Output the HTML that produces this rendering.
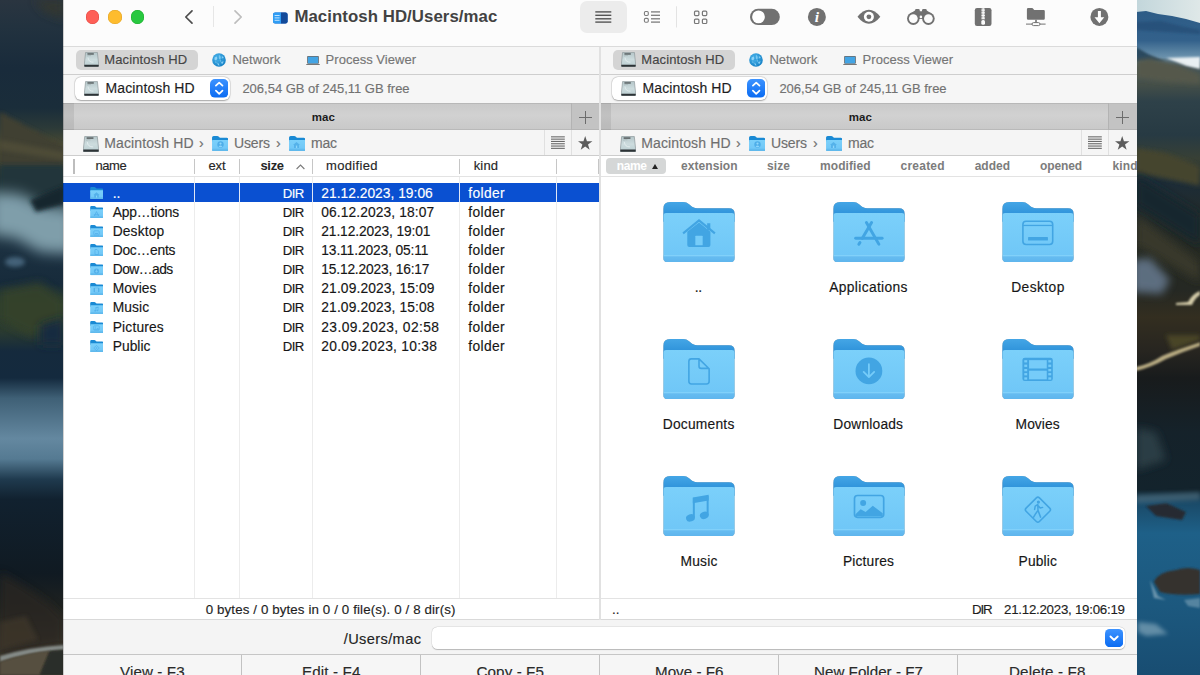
<!DOCTYPE html>
<html lang="en">
<head>
<meta charset="utf-8">
<title>Commander One</title>
<style>
*{box-sizing:border-box;margin:0;padding:0}
html,body{width:1200px;height:675px;overflow:hidden;background:#14222c;font-family:"Liberation Sans",sans-serif;color:#111}
.abs,.t{position:absolute}
.t{white-space:nowrap;line-height:1;-webkit-text-stroke:.15px currentColor}
#win{position:absolute;left:63px;top:0;width:1074px;height:675px;background:#fff;overflow:hidden}
.band{position:absolute;left:0;width:1074px}
</style>
</head>
<body>
<svg width="0" height="0" style="position:absolute">
<defs>
<linearGradient id="gBack" x1="0" y1="0" x2="0" y2="1"><stop offset="0" stop-color="#44a6e6"/><stop offset="1" stop-color="#2287d3"/></linearGradient>
<linearGradient id="gFront" x1="0" y1="0" x2="0" y2="1"><stop offset="0" stop-color="#7bd0fa"/><stop offset=".85" stop-color="#70c7f7"/><stop offset="1" stop-color="#63b9ee"/></linearGradient>
<linearGradient id="gHD" x1="0" y1="0" x2="0" y2="1"><stop offset="0" stop-color="#b4c5c8"/><stop offset=".5" stop-color="#cddcde"/><stop offset="1" stop-color="#b9cdd0"/></linearGradient>
<radialGradient id="gGlobe" cx=".4" cy=".35" r=".7"><stop offset="0" stop-color="#4fb8ee"/><stop offset="1" stop-color="#147fc4"/></radialGradient>
<linearGradient id="gBlueBtn" x1="0" y1="0" x2="0" y2="1"><stop offset="0" stop-color="#3d93ff"/><stop offset="1" stop-color="#0a6bf2"/></linearGradient>
<symbol id="folder" viewBox="0 0 72 61">
<path d="M0 7 Q0 0 7 0 H20 Q23.5 0 26 2.2 L29 4.8 Q31 6.2 34 6.2 H66 Q72 6.2 72 12 V20 H0 Z" fill="url(#gBack)"/>
<path d="M0 14 Q0 11 3 11 H69 Q72 11 72 14 V56 Q72 60.5 67.5 60.5 H4.5 Q0 60.5 0 56 Z" fill="url(#gFront)"/>
<path d="M0 54.6 H72 V56 Q72 60.5 67.5 60.5 H4.5 Q0 60.5 0 56Z" fill="#5ab0ea" opacity=".35"/><rect x="0" y="53.6" width="72" height="1" fill="#8dd8fb" opacity=".8"/>
</symbol>
<symbol id="sfolder" viewBox="0 0 16 15">
<path d="M0 1.6 Q0 0 1.6 0 H5 Q6 0 6.8 .8 L7.4 1.4 Q7.9 1.8 8.8 1.8 H14.6 Q16 1.8 16 3.2 V6 H0 Z" fill="#1a8ad4"/>
<path d="M0 4.6 Q0 4 .6 4 H15.4 Q16 4 16 4.6 V13.6 Q16 15 14.6 15 H1.4 Q0 15 0 13.6 Z" fill="url(#gFront)"/>
<rect x="0" y="12.6" width="16" height="2.4" rx="1.2" fill="#5db6ea" opacity=".7"/>
</symbol>
<symbol id="hd" viewBox="0 0 15 15">
<path d="M1.6 .4 H13.4 L14.7 12.6 V14 Q14.7 14.8 13.9 14.8 H1.1 Q.3 14.8 .3 14 V12.6 Z" fill="url(#gHD)" stroke="#858f92" stroke-width=".6"/>
<path d="M.3 12.7 H14.7 V14 Q14.7 14.8 13.9 14.8 H1.1 Q.3 14.8 .3 14 Z" fill="#2d3336"/>
<rect x="3.4" y="1.2" width="6.4" height="1.5" fill="#5d6466"/>
<path d="M4 5.5 Q4.5 10.5 9.5 10.2" fill="none" stroke="#e9f1f2" stroke-width=".8" opacity=".9"/>
<path d="M3 4 Q5 3.2 7 3.6" fill="none" stroke="#9aa8aa" stroke-width=".5"/>
</symbol>
<symbol id="globe" viewBox="0 0 14 14">
<circle cx="7" cy="7" r="6.8" fill="url(#gGlobe)"/>
<path d="M2.6 4.4 L4.6 3.6 L5.4 5.6 L4 7.4 L2.4 6.6 Z M7.4 1.6 L8.6 4 L8.2 6.4 L7.2 5.6 Z M10 3 L11.8 4.8 L10.8 5.6 L9.8 4.4Z M9.2 9 L11.6 8.2 L10.8 10.8 L9.4 10.6Z M5.2 9.6 L6.6 10.4 L7.6 12.6 L6 12.2 Z M7.8 7.2 L9.2 7.8 L8.2 8.8Z M3 8.6 L4.4 8.8 L4.2 10.4Z" fill="#9fdcfb" opacity=".8"/>
<path d="M5.8 2 L6.6 6.8 L5.6 7.2 Z M9 6 L10.4 6.4 L9.4 7.4Z" fill="#0f74b8" opacity=".6"/>
</symbol>
<symbol id="laptop" viewBox="0 0 15 10">
<rect x="1.2" y="0" width="12.6" height="8.4" rx=".8" fill="#6b6b6b"/>
<rect x="2" y=".8" width="11" height="7" fill="#43a4e4"/>
<path d="M0 8.5 H15 L14.4 9.6 H.6 Z" fill="#777"/>
</symbol>
</defs></svg>
<svg class="abs" style="left:0;top:0" width="64" height="675" viewBox="0 0 64 675">
<defs>
<linearGradient id="lbg" x1="0" y1="0" x2="0" y2="675" gradientUnits="userSpaceOnUse">
<stop offset="0" stop-color="#2a3540"/><stop offset=".04" stop-color="#22323f"/><stop offset=".1" stop-color="#192b3b"/><stop offset=".16" stop-color="#1a2d3a"/>
<stop offset=".19" stop-color="#2c3a38"/><stop offset=".215" stop-color="#4a4a32"/><stop offset=".24" stop-color="#3c4030"/><stop offset=".27" stop-color="#23343a"/>
<stop offset=".3" stop-color="#2a4048"/><stop offset=".37" stop-color="#1b3040"/><stop offset=".42" stop-color="#172b3b"/><stop offset=".45" stop-color="#2c3d2e"/><stop offset=".49" stop-color="#2b3b30"/>
<stop offset=".52" stop-color="#152a3d"/><stop offset=".56" stop-color="#142a3e"/><stop offset=".59" stop-color="#3f6076"/><stop offset=".65" stop-color="#6488a0"/><stop offset=".68" stop-color="#557a92"/><stop offset=".71" stop-color="#1f3a4e"/>
<stop offset=".74" stop-color="#11212f"/><stop offset=".85" stop-color="#101a22"/><stop offset=".9" stop-color="#1f2220"/><stop offset=".95" stop-color="#39342a"/><stop offset="1" stop-color="#3a372c"/>
</linearGradient>
<filter id="b4" x="-50%" y="-50%" width="200%" height="200%"><feGaussianBlur stdDeviation="4"/></filter>
<filter id="b2" x="-50%" y="-50%" width="200%" height="200%"><feGaussianBlur stdDeviation="2"/></filter>
<filter id="b7" x="-50%" y="-50%" width="200%" height="200%"><feGaussianBlur stdDeviation="7"/></filter>
<filter id="b1" x="-50%" y="-50%" width="200%" height="200%"><feGaussianBlur stdDeviation=".8"/></filter>
</defs>
<rect width="64" height="675" fill="url(#lbg)"/>
<path d="M34 0 H64 V20 L44 12Z" fill="#34372f" filter="url(#b4)" opacity=".8"/>
<path d="M0 112 L30 128 L64 146 V166 H0Z" fill="#403f30" filter="url(#b2)"/>
<path d="M0 140 L64 152 V160 L0 150Z" fill="#57533b" filter="url(#b2)" opacity=".6"/>
<path d="M0 165 H64 V200 H0Z" fill="#23343a" filter="url(#b2)"/>
<path d="M-10 192 L20 194 L42 206 L74 210 V254 L40 252 L16 238 L-10 234Z" fill="#7f9eaa" filter="url(#b7)"/>
<path d="M30 200 L64 186 V204 L36 212Z" fill="#16262e" filter="url(#b2)"/>
<ellipse cx="15" cy="262" rx="10" ry="5" fill="#4f7088" filter="url(#b2)" opacity=".8"/>
<path d="M0 290 L40 282 L64 300 V330 L30 336 L0 320Z" fill="#34432c" filter="url(#b4)" opacity=".9"/>
<path d="M40 325 L64 318 V345 H40Z" fill="#152a40" filter="url(#b4)"/>
<path d="M0 572 L30 590 L50 604 L64 618 V645 L0 655Z" fill="#2b2823" filter="url(#b4)" opacity=".75"/>
<path d="M0 622 L26 616 L38 640 L0 650Z" fill="#40392b" filter="url(#b2)" opacity=".7"/>
<path d="M0 656 Q30 647 64 645 V650 Q30 652 0 662Z" fill="#848a87" filter="url(#b1)"/>
<path d="M0 662 Q30 652 50 651 L40 675 H0Z" fill="#565040" filter="url(#b1)"/>
<path d="M50 651 L64 650 V675 H40Z" fill="#2a2d2a" filter="url(#b1)"/>
</svg>
<svg class="abs" style="left:1136px;top:0" width="64" height="675" viewBox="0 0 64 675">
<defs>
<linearGradient id="rbg" x1="0" y1="0" x2="0" y2="675" gradientUnits="userSpaceOnUse">
<stop offset="0" stop-color="#2b5a85"/><stop offset=".06" stop-color="#33618b"/><stop offset=".075" stop-color="#557f9f"/><stop offset=".085" stop-color="#6c93ae"/>
<stop offset=".1" stop-color="#44555a"/><stop offset=".125" stop-color="#454f48"/><stop offset=".15" stop-color="#2e4149"/><stop offset=".2" stop-color="#273a43"/>
<stop offset=".235" stop-color="#384035"/><stop offset=".27" stop-color="#1c2c37"/><stop offset=".32" stop-color="#232b2a"/><stop offset=".38" stop-color="#252922"/>
<stop offset=".43" stop-color="#252823"/><stop offset=".47" stop-color="#332e20"/><stop offset=".52" stop-color="#272520"/><stop offset=".56" stop-color="#181b1c"/>
<stop offset=".64" stop-color="#15222a"/><stop offset=".725" stop-color="#13232c"/><stop offset=".745" stop-color="#1a4a68"/><stop offset=".79" stop-color="#1e6088"/><stop offset=".9" stop-color="#1c587e"/><stop offset="1" stop-color="#184d72"/>
</linearGradient>
<linearGradient id="sky" x1="0" y1="0" x2="1" y2="0"><stop offset="0" stop-color="#c2d6db"/><stop offset="1" stop-color="#dfe8e8"/></linearGradient>
</defs>
<rect width="64" height="675" fill="url(#rbg)"/>
<path d="M0 0 H64 V23 L50 19 L36 16 L22 14 L10 11 L0 12Z" fill="url(#sky)"/>
<path d="M0 22 L25 21 L45 26 L64 30 V34 L0 30Z" fill="#264f78" filter="url(#b1)" opacity=".8"/>
<path d="M30 58 L64 57 V69 L50 66Z" fill="#e9f0f3" filter="url(#b1)"/>
<path d="M0 47 L12 54 L30 62 L0 62Z" fill="#2b485e" filter="url(#b1)"/>
<path d="M0 60 L14 58 L40 64 L64 74 V84 L30 82 L0 78Z" fill="#55594b" filter="url(#b2)"/>
<path d="M0 148 L30 153 L64 166 V186 L0 172Z" fill="#44452f" filter="url(#b2)"/>
<path d="M0 175 L64 215 V245 L0 205Z" fill="#15252f" filter="url(#b4)"/>
<path d="M0 215 L64 262 V282 L0 245Z" fill="#38372a" filter="url(#b4)"/>
<path d="M-4 260 L14 258 L34 280 L26 294 L-4 292Z" fill="#64768a" filter="url(#b4)" opacity=".9"/>
<path d="M40 303 L52 302 Q56 294 64 291 V295 Q59 298 56 305 L40 305Z" fill="#d3cba8" filter="url(#b1)"/>
<path d="M0 367 Q14 364 26 356 Q44 348 64 342 V346 Q46 352 30 359 Q16 367 0 371Z" fill="#b8ab82" filter="url(#b1)"/>
<path d="M30 335 L64 335 V340 L36 350Z" fill="#4a4528" filter="url(#b2)"/>
<path d="M0 428 L20 432 L30 460 L0 470Z" fill="#2b3c45" filter="url(#b4)"/>
<path d="M10 506 L30 503 L50 512 L46 520 L20 516Z" fill="#262c33" filter="url(#b1)"/>
<path d="M18 582 Q22 572 40 570 Q52 566 64 570 V594 Q40 596 24 592Z" fill="#34312d" filter="url(#b1)"/>
<path d="M14 580 L22 596 L30 600 L18 598Z" fill="#a9c3d0" filter="url(#b1)" opacity=".55"/>
<path d="M48 600 L64 598 V608 L52 606Z" fill="#8fb0c2" filter="url(#b1)" opacity=".5"/>
<path d="M2 622 L20 624 L32 634 L10 636 L2 632Z" fill="#9dbccb" filter="url(#b2)" opacity=".55"/>
<path d="M0 495 L64 492 V500 L0 503Z" fill="#5f7f90" filter="url(#b2)" opacity=".5"/>
</svg>

<div id="win">
<div class="band" style="top:0;height:46px;background:#fcfcfc"></div>
<div class="abs" style="left:22.7px;top:10.1px;width:13.6px;height:13.6px;background:#fe5f57;border-radius:50%;box-shadow:inset 0 0 0 .5px #e0443e"></div>
<div class="abs" style="left:45.2px;top:10.1px;width:13.6px;height:13.6px;background:#febc2e;border-radius:50%;box-shadow:inset 0 0 0 .5px #dea123"></div>
<div class="abs" style="left:67.7px;top:10.1px;width:13.6px;height:13.6px;background:#28c840;border-radius:50%;box-shadow:inset 0 0 0 .5px #1aab29"></div>
<svg class="abs" style="left:118px;top:8px" width="16" height="18" viewBox="0 0 16 18"><path d="M11 2.8 L4.8 9 L11 15.2" fill="none" stroke="#4d4d4d" stroke-width="1.7" stroke-linecap="round" stroke-linejoin="round"/></svg>
<div class="abs" style="left:150px;top:6px;width:1px;height:21px;background:#e6e6e6;"></div>
<svg class="abs" style="left:167px;top:8px" width="16" height="18" viewBox="0 0 16 18"><path d="M5 2.8 L11.2 9 L5 15.2" fill="none" stroke="#bdbdbd" stroke-width="1.7" stroke-linecap="round" stroke-linejoin="round"/></svg>
<svg class="abs" style="left:210px;top:12px" width="15" height="12" viewBox="0 0 15 12"><rect x="0" y=".5" width="14.6" height="11" rx="2.2" fill="#1a5fc0"/><path d="M2.2 .5 H8 V11.5 H2.2 Q0 11.5 0 9.3 V2.7 Q0 .5 2.2 .5Z" fill="#2f9df4"/><path d="M8 .5 H12.4 Q14.6 .5 14.6 2.7 V9.3 Q14.6 11.5 12.4 11.5 H8Z" fill="#134a9a"/><rect x="1.6" y="3" width="5" height="1" fill="#bfe3ff"/><rect x="1.6" y="5.4" width="5" height="1" fill="#bfe3ff"/><rect x="1.6" y="7.8" width="5" height="1" fill="#bfe3ff"/></svg>
<div class="t" style="left:231.40px;top:9.00px;font-size:16.8px;letter-spacing:0.068px;color:#424242;font-weight:bold;-webkit-text-stroke:0;">Macintosh HD/Users/mac</div>
<div class="abs" style="left:517px;top:1px;width:47px;height:31.5px;background:#ececec;border-radius:7px"></div>
<svg class="abs" style="left:517px;top:0" width="560" height="40" viewBox="580 0 560 40"><rect x="595.3" y="11.2" width="16" height="1.4" fill="#555"/><rect x="595.3" y="14.6" width="16" height="1.4" fill="#555"/><rect x="595.3" y="18.1" width="16" height="1.4" fill="#555"/><rect x="595.3" y="21.4" width="16" height="1.4" fill="#555"/><rect x="651" y="11.25" width="9" height="1.3" fill="#7c7c7c"/><rect x="651" y="14.65" width="9" height="1.3" fill="#7c7c7c"/><rect x="651" y="18.15" width="9" height="1.3" fill="#7c7c7c"/><rect x="651" y="21.45" width="9" height="1.3" fill="#7c7c7c"/><rect x="644.4" y="11.55" width="3.9" height="3.9" rx="1.2" fill="none" stroke="#7c7c7c" stroke-width="1.1"/><rect x="644.4" y="18.35" width="3.9" height="3.9" rx="1.2" fill="none" stroke="#7c7c7c" stroke-width="1.1"/><rect x="676" y="6.3" width="1" height="21.2" fill="#e3e3e3"/><rect x="694.5" y="11.2" width="4.4" height="4.4" rx="1" fill="none" stroke="#777" stroke-width="1.2"/><rect x="694.5" y="19.1" width="4.4" height="4.4" rx="1" fill="none" stroke="#777" stroke-width="1.2"/><rect x="702.4" y="11.2" width="4.4" height="4.4" rx="1" fill="none" stroke="#777" stroke-width="1.2"/><rect x="702.4" y="19.1" width="4.4" height="4.4" rx="1" fill="none" stroke="#777" stroke-width="1.2"/><rect x="750" y="8.8" width="29.8" height="16.2" rx="8.1" fill="#717171"/><circle cx="758.5" cy="16.9" r="6.4" fill="#fff"/><circle cx="816.9" cy="16.9" r="9" fill="#717171"/><text x="816.9" y="22.2" font-family="Liberation Serif,serif" font-style="italic" font-weight="bold" font-size="15.5" fill="#fff" text-anchor="middle">i</text><path d="M857.5 16.8 Q863 9.8 868.9 9.8 Q874.8 9.8 880.3 16.8 Q874.8 23.8 868.9 23.8 Q863 23.8 857.5 16.8Z" fill="#717171"/><circle cx="868.9" cy="16.8" r="5" fill="#fff"/><circle cx="868.9" cy="16.8" r="2.4" fill="#717171"/><path d="M915 10.4 Q915 9 916.4 9 H918.4 Q919.8 9 919.8 10.4 V11.2 H922 V10.4 Q922 9 923.4 9 H925.4 Q926.8 9 926.8 10.4 L932 14 L928.5 19 H913.1 L909.6 14 Z" fill="#717171"/><circle cx="913.3" cy="18.6" r="6.3" fill="#717171"/><circle cx="928.4" cy="18.6" r="6.3" fill="#717171"/><circle cx="913.3" cy="18.6" r="4.4" fill="#fcfcfc"/><circle cx="928.4" cy="18.6" r="4.4" fill="#fcfcfc"/><circle cx="920.9" cy="16.9" r="1.3" fill="#fcfcfc"/><rect x="974.8" y="8.1" width="16.7" height="17.9" rx="2.2" fill="#717171"/><rect x="981.4" y="8.6" width="3.5" height="1.05" fill="#fcfcfc"/><rect x="981.4" y="10.2" width="3.5" height="1.05" fill="#fcfcfc"/><rect x="981.4" y="11.8" width="3.5" height="1.05" fill="#fcfcfc"/><rect x="981.4" y="13.4" width="3.5" height="1.05" fill="#fcfcfc"/><rect x="981.4" y="15" width="3.5" height="1.05" fill="#fcfcfc"/><rect x="981.4" y="16.6" width="3.5" height="1.05" fill="#fcfcfc"/><rect x="981.4" y="18.2" width="3.5" height="1.05" fill="#fcfcfc"/><rect x="982.6" y="8.1" width="1.1" height="11" fill="#fcfcfc"/><rect x="981.3" y="19.9" width="3.7" height="4.8" rx="1.5" fill="#fcfcfc"/><path d="M1026.9 9.4 Q1026.9 8.1 1028.2 8.1 H1032 Q1032.8 8.1 1033.4 8.9 L1034.2 9.9 H1043.6 Q1044.8 9.9 1044.8 11.1 V18.6 Q1044.8 19.8 1043.6 19.8 H1028.1 Q1026.9 19.8 1026.9 18.6Z" fill="#717171"/><rect x="1035.2" y="19.8" width="1.6" height="3.4" fill="#717171"/><rect x="1026" y="23.6" width="19.6" height="1" fill="#717171"/><rect x="1032" y="22.6" width="8" height="3" rx="1.5" fill="#fcfcfc" stroke="#717171" stroke-width="1"/><circle cx="1099.4" cy="16.9" r="9" fill="#717171"/><path d="M1097.9 11 H1100.9 V17.3 H1104.3 L1099.4 23.2 L1094.5 17.3 H1097.9Z" fill="#fff"/></svg>
<div class="abs" style="left:0px;top:46px;width:1074px;height:1px;background:#dbdbdb;"></div>
<div class="abs" style="left:0px;top:47px;width:1074px;height:56px;background:#f6f6f6;"></div>
<div class="abs" style="left:0px;top:74px;width:1074px;height:1px;background:#cecece;"></div>
<div class="abs" style="left:13px;top:50px;width:121.7px;height:19.8px;background:#d4d4d4;border-radius:5px"></div>
<svg class="abs" style="left:21px;top:52px" width="15" height="15"><use href="#hd"/></svg>
<div class="t" style="left:41.30px;top:53.00px;font-size:13px;letter-spacing:0.115px;color:#454545;">Macintosh HD</div>
<svg class="abs" style="left:149.3px;top:52.8px" width="14" height="14"><use href="#globe"/></svg>
<div class="t" style="left:169.40px;top:53.00px;font-size:13px;letter-spacing:0.054px;color:#757575;">Network</div>
<svg class="abs" style="left:243px;top:55.8px" width="14" height="9.4"><use href="#laptop"/></svg>
<div class="t" style="left:262.60px;top:53.00px;font-size:13px;letter-spacing:0.025px;color:#757575;">Process Viewer</div>
<div class="abs" style="left:11.6px;top:77.2px;width:155.7px;height:23px;background:#fff;border-radius:6px;box-shadow:0 0 0 .5px rgba(0,0,0,.12),0 .5px 1.5px rgba(0,0,0,.28)"></div>
<svg class="abs" style="left:21px;top:80.8px" width="15" height="15"><use href="#hd"/></svg>
<div class="t" style="left:42.50px;top:81.00px;font-size:14px;letter-spacing:0.116px;color:#1e1e1e;">Macintosh HD</div>
<svg class="abs" style="left:147px;top:79.3px" width="18.4" height="18.6" viewBox="0 0 18.4 18.6"><rect width="18.4" height="18.6" rx="5" fill="url(#gBlueBtn)"/><path d="M5.9 6.7 L9.2 3.6 L12.5 6.7 M5.9 11.6 L9.2 14.8 L12.5 11.6" fill="none" stroke="#fff" stroke-width="1.7" stroke-linecap="round" stroke-linejoin="round"/></svg>
<div class="t" style="left:179.40px;top:82.00px;font-size:13px;letter-spacing:-0.009px;color:#727272;">206,54 GB of 245,11 GB free</div>
<div class="abs" style="left:0px;top:103px;width:537px;height:27px;background:linear-gradient(#cacaca,#d1d1d1 45%,#c9c9c9);border-top:1px solid #b8b8b8;border-bottom:1px solid #b9b9b9"></div>
<div class="abs" style="left:0px;top:103px;width:11px;height:27px;background:rgba(0,0,0,.075);"></div>
<div class="abs" style="left:508px;top:103px;width:28.5px;height:27px;background:#c3c3c3;box-shadow:inset 1px 0 0 #b3b3b3,inset 0 -1px 0 #b5b5b5,inset 0 1px 0 #bbb"></div>
<div class="abs" style="left:515.5px;top:116.5px;width:13px;height:1px;background:#6c6c6c;"></div>
<div class="abs" style="left:521.5px;top:110.5px;width:1px;height:13px;background:#6c6c6c;"></div>
<div class="t" style="left:248.70px;top:112.00px;font-size:11.5px;letter-spacing:0.141px;color:#1c1c1c;font-weight:bold;-webkit-text-stroke:0;">mac</div>
<div class="abs" style="left:0px;top:130px;width:537px;height:25px;background:#f5f5f5;"></div>
<svg class="abs" style="left:19.5px;top:135.5px" width="16" height="16"><use href="#hd"/></svg>
<div class="t" style="left:41.20px;top:136.00px;font-size:14px;letter-spacing:0.126px;color:#6f6f6f;">Macintosh HD</div>
<div class="t" style="left:136.00px;top:136.00px;font-size:14px;color:#6f6f6f;">›</div>
<svg class="abs" style="left:149.1px;top:136.1px" width="16.3" height="15.2"><use href="#sfolder"/></svg>
<div class="t" style="left:171.00px;top:136.00px;font-size:14px;letter-spacing:-0.140px;color:#6f6f6f;">Users</div>
<div class="t" style="left:213.00px;top:136.00px;font-size:14px;color:#6f6f6f;">›</div>
<svg class="abs" style="left:225.7px;top:136.1px" width="16.3" height="15.2"><use href="#sfolder"/></svg>
<div class="t" style="left:248.00px;top:136.00px;font-size:14px;letter-spacing:-0.225px;color:#6f6f6f;">mac</div>
<svg class="abs" style="left:153.8px;top:141.3px" width="7" height="7" viewBox="0 0 7 7"><circle cx="3.5" cy="3.5" r="3.2" fill="#4eaee9"/><circle cx="3.5" cy="2.6" r="1.1" fill="#8ed6fb"/><path d="M1.5 5.6 Q3.5 3.2 5.5 5.6 Q3.5 7 1.5 5.6Z" fill="#8ed6fb"/></svg>
<svg class="abs" style="left:230.4px;top:141.8px" width="7" height="6" viewBox="0 0 7 6"><path d="M3.5 0 L7 3 H6 V6 H1 V3 H0Z" fill="#55b2ea"/><rect x="2.9" y="3.6" width="1.3" height="2.4" fill="#8ed6fb"/></svg>
<div class="abs" style="left:480.5px;top:130px;width:1px;height:25px;background:#e0e0e0;"></div>
<div class="abs" style="left:508px;top:130px;width:1px;height:25px;background:#e0e0e0;"></div>
<svg class="abs" style="left:487.7px;top:136px" width="14" height="13" viewBox="0 0 14 13"><rect x="0" y="0.3" width="13.8" height="1.1" fill="#6a6a6a"/><rect x="0" y="2.6" width="13.8" height="1.1" fill="#6a6a6a"/><rect x="0" y="4.9" width="13.8" height="1.1" fill="#6a6a6a"/><rect x="0" y="7.2" width="13.8" height="1.1" fill="#6a6a6a"/><rect x="0" y="9.5" width="13.8" height="1.1" fill="#6a6a6a"/><rect x="0" y="11.8" width="13.8" height="1.1" fill="#6a6a6a"/></svg>
<svg class="abs" style="left:515.4px;top:136.4px" width="14.4" height="13.8" viewBox="0 0 24 23"><path d="M12 0 L14.9 8.6 L24 8.7 L16.7 14.1 L19.4 22.8 L12 17.6 L4.6 22.8 L7.3 14.1 L0 8.7 L9.1 8.6Z" fill="#5c5c5c"/></svg>
<div class="abs" style="left:0px;top:155px;width:537px;height:1px;background:#cdcdcd;"></div>
<div class="abs" style="left:550px;top:50px;width:121.7px;height:19.8px;background:#d4d4d4;border-radius:5px"></div>
<svg class="abs" style="left:558px;top:52px" width="15" height="15"><use href="#hd"/></svg>
<div class="t" style="left:578.30px;top:53.00px;font-size:13px;letter-spacing:0.115px;color:#454545;">Macintosh HD</div>
<svg class="abs" style="left:686.3px;top:52.8px" width="14" height="14"><use href="#globe"/></svg>
<div class="t" style="left:706.40px;top:53.00px;font-size:13px;letter-spacing:0.054px;color:#757575;">Network</div>
<svg class="abs" style="left:780px;top:55.8px" width="14" height="9.4"><use href="#laptop"/></svg>
<div class="t" style="left:799.60px;top:53.00px;font-size:13px;letter-spacing:0.025px;color:#757575;">Process Viewer</div>
<div class="abs" style="left:548.6px;top:77.2px;width:155.7px;height:23px;background:#fff;border-radius:6px;box-shadow:0 0 0 .5px rgba(0,0,0,.12),0 .5px 1.5px rgba(0,0,0,.28)"></div>
<svg class="abs" style="left:558px;top:80.8px" width="15" height="15"><use href="#hd"/></svg>
<div class="t" style="left:579.50px;top:81.00px;font-size:14px;letter-spacing:0.116px;color:#1e1e1e;">Macintosh HD</div>
<svg class="abs" style="left:684px;top:79.3px" width="18.4" height="18.6" viewBox="0 0 18.4 18.6"><rect width="18.4" height="18.6" rx="5" fill="url(#gBlueBtn)"/><path d="M5.9 6.7 L9.2 3.6 L12.5 6.7 M5.9 11.6 L9.2 14.8 L12.5 11.6" fill="none" stroke="#fff" stroke-width="1.7" stroke-linecap="round" stroke-linejoin="round"/></svg>
<div class="t" style="left:716.40px;top:82.00px;font-size:13px;letter-spacing:-0.009px;color:#727272;">206,54 GB of 245,11 GB free</div>
<div class="abs" style="left:537px;top:103px;width:537px;height:27px;background:linear-gradient(#cacaca,#d1d1d1 45%,#c9c9c9);border-top:1px solid #b8b8b8;border-bottom:1px solid #b9b9b9"></div>
<div class="abs" style="left:538px;top:103px;width:10px;height:27px;background:rgba(0,0,0,.075);"></div>
<div class="abs" style="left:1045px;top:103px;width:28.5px;height:27px;background:#c3c3c3;box-shadow:inset 1px 0 0 #b3b3b3,inset 0 -1px 0 #b5b5b5,inset 0 1px 0 #bbb"></div>
<div class="abs" style="left:1052.5px;top:116.5px;width:13px;height:1px;background:#6c6c6c;"></div>
<div class="abs" style="left:1058.5px;top:110.5px;width:1px;height:13px;background:#6c6c6c;"></div>
<div class="t" style="left:785.70px;top:112.00px;font-size:11.5px;letter-spacing:0.141px;color:#1c1c1c;font-weight:bold;-webkit-text-stroke:0;">mac</div>
<div class="abs" style="left:537px;top:130px;width:537px;height:25px;background:#f5f5f5;"></div>
<svg class="abs" style="left:556.5px;top:135.5px" width="16" height="16"><use href="#hd"/></svg>
<div class="t" style="left:578.20px;top:136.00px;font-size:14px;letter-spacing:0.126px;color:#6f6f6f;">Macintosh HD</div>
<div class="t" style="left:673.00px;top:136.00px;font-size:14px;color:#6f6f6f;">›</div>
<svg class="abs" style="left:686.1px;top:136.1px" width="16.3" height="15.2"><use href="#sfolder"/></svg>
<div class="t" style="left:708.00px;top:136.00px;font-size:14px;letter-spacing:-0.140px;color:#6f6f6f;">Users</div>
<div class="t" style="left:750.00px;top:136.00px;font-size:14px;color:#6f6f6f;">›</div>
<svg class="abs" style="left:762.7px;top:136.1px" width="16.3" height="15.2"><use href="#sfolder"/></svg>
<div class="t" style="left:785.00px;top:136.00px;font-size:14px;letter-spacing:-0.225px;color:#6f6f6f;">mac</div>
<svg class="abs" style="left:690.8px;top:141.3px" width="7" height="7" viewBox="0 0 7 7"><circle cx="3.5" cy="3.5" r="3.2" fill="#4eaee9"/><circle cx="3.5" cy="2.6" r="1.1" fill="#8ed6fb"/><path d="M1.5 5.6 Q3.5 3.2 5.5 5.6 Q3.5 7 1.5 5.6Z" fill="#8ed6fb"/></svg>
<svg class="abs" style="left:767.4px;top:141.8px" width="7" height="6" viewBox="0 0 7 6"><path d="M3.5 0 L7 3 H6 V6 H1 V3 H0Z" fill="#55b2ea"/><rect x="2.9" y="3.6" width="1.3" height="2.4" fill="#8ed6fb"/></svg>
<div class="abs" style="left:1017.5px;top:130px;width:1px;height:25px;background:#e0e0e0;"></div>
<div class="abs" style="left:1045px;top:130px;width:1px;height:25px;background:#e0e0e0;"></div>
<svg class="abs" style="left:1024.7px;top:136px" width="14" height="13" viewBox="0 0 14 13"><rect x="0" y="0.3" width="13.8" height="1.1" fill="#6a6a6a"/><rect x="0" y="2.6" width="13.8" height="1.1" fill="#6a6a6a"/><rect x="0" y="4.9" width="13.8" height="1.1" fill="#6a6a6a"/><rect x="0" y="7.2" width="13.8" height="1.1" fill="#6a6a6a"/><rect x="0" y="9.5" width="13.8" height="1.1" fill="#6a6a6a"/><rect x="0" y="11.8" width="13.8" height="1.1" fill="#6a6a6a"/></svg>
<svg class="abs" style="left:1052.4px;top:136.4px" width="14.4" height="13.8" viewBox="0 0 24 23"><path d="M12 0 L14.9 8.6 L24 8.7 L16.7 14.1 L19.4 22.8 L12 17.6 L4.6 22.8 L7.3 14.1 L0 8.7 L9.1 8.6Z" fill="#5c5c5c"/></svg>
<div class="abs" style="left:537px;top:155px;width:537px;height:1px;background:#cdcdcd;"></div>
<div class="t" style="left:32.50px;top:159.00px;font-size:13px;letter-spacing:-0.440px;color:#262626;">name</div>
<div class="t" style="left:145.50px;top:159.00px;font-size:13px;letter-spacing:-0.171px;color:#262626;">ext</div>
<div class="t" style="left:197.50px;top:159.00px;font-size:13px;letter-spacing:-0.357px;color:#262626;font-weight:bold;-webkit-text-stroke:0;">size</div>
<svg class="abs" style="left:232.7px;top:164px" width="9" height="6" viewBox="0 0 9 6"><path d="M.6 5 L4.5 1 L8.4 5" fill="none" stroke="#7a7a7a" stroke-width="1.1"/></svg>
<div class="t" style="left:263.00px;top:159.00px;font-size:13px;letter-spacing:0.337px;color:#262626;">modified</div>
<div class="t" style="left:410.70px;top:159.00px;font-size:13px;letter-spacing:0.150px;color:#262626;">kind</div>
<div class="abs" style="left:10.4px;top:158.8px;width:1.2px;height:15px;background:#bdbdbd;"></div>
<div class="abs" style="left:130.5px;top:158.8px;width:1.2px;height:15px;background:#c6c6c6;"></div>
<div class="abs" style="left:175.6px;top:158.8px;width:1.2px;height:15px;background:#c6c6c6;"></div>
<div class="abs" style="left:249.2px;top:158.8px;width:1.2px;height:15px;background:#c6c6c6;"></div>
<div class="abs" style="left:396.2px;top:158.8px;width:1.2px;height:15px;background:#c6c6c6;"></div>
<div class="abs" style="left:493px;top:158.8px;width:1.2px;height:15px;background:#c6c6c6;"></div>
<div class="abs" style="left:535.3px;top:158.8px;width:1.2px;height:15px;background:#c6c6c6;"></div>
<div class="abs" style="left:0px;top:176px;width:537px;height:1px;background:#e3e3e3;"></div>
<div class="abs" style="left:130.6px;top:177px;width:1.2px;height:421px;background:#ececec;"></div>
<div class="abs" style="left:175.7px;top:177px;width:1.2px;height:421px;background:#ececec;"></div>
<div class="abs" style="left:249.3px;top:177px;width:1.2px;height:421px;background:#ececec;"></div>
<div class="abs" style="left:396.3px;top:177px;width:1.2px;height:421px;background:#ececec;"></div>
<div class="abs" style="left:493px;top:177px;width:1.2px;height:421px;background:#ececec;"></div>
<div class="abs" style="left:0px;top:183px;width:536.5px;height:18.9px;background:#0a50d1;"></div>
<div class="abs" style="left:130.6px;top:183px;width:1.2px;height:18.9px;background:#dfe6f5;"></div>
<div class="abs" style="left:175.7px;top:183px;width:1.2px;height:18.9px;background:#dfe6f5;"></div>
<div class="abs" style="left:249.3px;top:183px;width:1.2px;height:18.9px;background:#dfe6f5;"></div>
<div class="abs" style="left:396.3px;top:183px;width:1.2px;height:18.9px;background:#dfe6f5;"></div>
<div class="abs" style="left:493px;top:183px;width:1.2px;height:18.9px;background:#dfe6f5;"></div>
<svg class="abs" style="left:26.7px;top:186.9px" width="13.4" height="12.2"><use href="#sfolder"/></svg>
<svg class="abs" style="left:30px;top:191.6px;opacity:.75" width="7" height="6" viewBox="0 0 7 6"><path d="M3.5 .3 L6.6 3 H5.8 V5.6 H1.2 V3 H.4Z" fill="#4aa9e6"/><rect x="3" y="3.6" width="1.1" height="2" fill="#8ed6fb"/></svg>
<div class="t" style="left:49.70px;top:187.00px;font-size:13.8px;color:#fff;">..</div>
<div class="t" style="left:219.80px;top:187.00px;font-size:13.2px;letter-spacing:-0.666px;color:#fff;">DIR</div>
<div class="t" style="left:258.30px;top:187.00px;font-size:13.8px;letter-spacing:0.014px;color:#fff;">21.12.2023, 19:06</div>
<div class="t" style="left:405.20px;top:187.00px;font-size:13.8px;letter-spacing:0.396px;color:#fff;">folder</div>
<svg class="abs" style="left:26.7px;top:206.025px" width="13.4" height="12.2"><use href="#sfolder"/></svg>
<svg class="abs" style="left:30px;top:210.725px;opacity:.75" width="7" height="6" viewBox="0 0 7 6"><path d="M3.5 .6 L1.4 5 M3.5 .6 L5.6 5 M.8 3.8 H6.2" fill="none" stroke="#4aa9e6" stroke-width=".9"/></svg>
<div class="t" style="left:49.70px;top:206.00px;font-size:13.8px;letter-spacing:-0.126px;color:#161616;">App…tions</div>
<div class="t" style="left:219.80px;top:206.00px;font-size:13.2px;letter-spacing:-0.666px;color:#161616;">DIR</div>
<div class="t" style="left:258.30px;top:206.00px;font-size:13.8px;letter-spacing:0.102px;color:#161616;">06.12.2023, 18:07</div>
<div class="t" style="left:405.20px;top:206.00px;font-size:13.8px;letter-spacing:0.396px;color:#161616;">folder</div>
<svg class="abs" style="left:26.7px;top:225.15px" width="13.4" height="12.2"><use href="#sfolder"/></svg>
<svg class="abs" style="left:30px;top:229.85px;opacity:.75" width="7" height="6" viewBox="0 0 7 6"><rect x=".8" y=".8" width="5.4" height="4.2" rx=".8" fill="none" stroke="#4aa9e6" stroke-width=".8"/><rect x="2" y="3.2" width="3" height=".9" fill="#4aa9e6"/></svg>
<div class="t" style="left:49.70px;top:225.00px;font-size:13.8px;letter-spacing:0.146px;color:#161616;">Desktop</div>
<div class="t" style="left:219.80px;top:225.00px;font-size:13.2px;letter-spacing:-0.666px;color:#161616;">DIR</div>
<div class="t" style="left:258.30px;top:225.00px;font-size:13.8px;letter-spacing:-0.129px;color:#161616;">21.12.2023, 19:01</div>
<div class="t" style="left:405.20px;top:225.00px;font-size:13.8px;letter-spacing:0.396px;color:#161616;">folder</div>
<svg class="abs" style="left:26.7px;top:244.275px" width="13.4" height="12.2"><use href="#sfolder"/></svg>
<svg class="abs" style="left:30px;top:248.975px;opacity:.75" width="7" height="6" viewBox="0 0 7 6"><path d="M2 .5 H4 L5.4 2 V5.5 H2Z" fill="none" stroke="#4aa9e6" stroke-width=".8"/></svg>
<div class="t" style="left:49.70px;top:244.00px;font-size:13.8px;letter-spacing:-0.232px;color:#161616;">Doc…ents</div>
<div class="t" style="left:219.80px;top:244.00px;font-size:13.2px;letter-spacing:-0.666px;color:#161616;">DIR</div>
<div class="t" style="left:258.30px;top:244.00px;font-size:13.8px;letter-spacing:-0.126px;color:#161616;">13.11.2023, 05:11</div>
<div class="t" style="left:405.20px;top:244.00px;font-size:13.8px;letter-spacing:0.396px;color:#161616;">folder</div>
<svg class="abs" style="left:26.7px;top:263.4px" width="13.4" height="12.2"><use href="#sfolder"/></svg>
<svg class="abs" style="left:30px;top:268.1px;opacity:.75" width="7" height="6" viewBox="0 0 7 6"><circle cx="3.5" cy="3" r="2.6" fill="#4aa9e6"/><path d="M3.5 1.6 V4.2 M2.4 3.2 L3.5 4.3 L4.6 3.2" fill="none" stroke="#8ed6fb" stroke-width=".7"/></svg>
<div class="t" style="left:49.70px;top:263.00px;font-size:13.8px;letter-spacing:-0.510px;color:#161616;">Dow…ads</div>
<div class="t" style="left:219.80px;top:263.00px;font-size:13.2px;letter-spacing:-0.666px;color:#161616;">DIR</div>
<div class="t" style="left:258.30px;top:263.00px;font-size:13.8px;letter-spacing:-0.192px;color:#161616;">15.12.2023, 16:17</div>
<div class="t" style="left:405.20px;top:263.00px;font-size:13.8px;letter-spacing:0.396px;color:#161616;">folder</div>
<svg class="abs" style="left:26.7px;top:282.525px" width="13.4" height="12.2"><use href="#sfolder"/></svg>
<svg class="abs" style="left:30px;top:287.225px;opacity:.75" width="7" height="6" viewBox="0 0 7 6"><rect x=".6" y=".8" width="5.8" height="4.4" rx=".6" fill="#4aa9e6"/><rect x="2" y="1.4" width="3" height="1.4" fill="#8ed6fb"/><rect x="2" y="3.3" width="3" height="1.4" fill="#8ed6fb"/></svg>
<div class="t" style="left:49.70px;top:282.00px;font-size:13.8px;letter-spacing:-0.023px;color:#161616;">Movies</div>
<div class="t" style="left:219.80px;top:282.00px;font-size:13.2px;letter-spacing:-0.666px;color:#161616;">DIR</div>
<div class="t" style="left:258.30px;top:282.00px;font-size:13.8px;letter-spacing:0.121px;color:#161616;">21.09.2023, 15:09</div>
<div class="t" style="left:405.20px;top:282.00px;font-size:13.8px;letter-spacing:0.396px;color:#161616;">folder</div>
<svg class="abs" style="left:26.7px;top:301.65px" width="13.4" height="12.2"><use href="#sfolder"/></svg>
<svg class="abs" style="left:30px;top:306.35px;opacity:.75" width="7" height="6" viewBox="0 0 7 6"><path d="M2.6 1.2 L5.4 .6 V1.8 L2.6 2.4Z" fill="#4aa9e6"/><rect x="2.6" y="1.4" width=".6" height="3.2" fill="#4aa9e6"/><rect x="4.8" y="1" width=".6" height="3.2" fill="#4aa9e6"/><circle cx="2.2" cy="4.7" r=".9" fill="#4aa9e6"/><circle cx="4.4" cy="4.3" r=".9" fill="#4aa9e6"/></svg>
<div class="t" style="left:49.70px;top:301.00px;font-size:13.8px;letter-spacing:0.116px;color:#161616;">Music</div>
<div class="t" style="left:219.80px;top:301.00px;font-size:13.2px;letter-spacing:-0.666px;color:#161616;">DIR</div>
<div class="t" style="left:258.30px;top:301.00px;font-size:13.8px;letter-spacing:0.121px;color:#161616;">21.09.2023, 15:08</div>
<div class="t" style="left:405.20px;top:301.00px;font-size:13.8px;letter-spacing:0.396px;color:#161616;">folder</div>
<svg class="abs" style="left:26.7px;top:320.775px" width="13.4" height="12.2"><use href="#sfolder"/></svg>
<svg class="abs" style="left:30px;top:325.475px;opacity:.75" width="7" height="6" viewBox="0 0 7 6"><rect x=".7" y=".8" width="5.6" height="4.4" rx=".8" fill="none" stroke="#4aa9e6" stroke-width=".8"/><path d="M1 4.6 L2.6 3.2 L3.6 3.9 L4.8 2.8 L6 4 V4.8 H1Z" fill="#4aa9e6"/><circle cx="2.4" cy="2.1" r=".6" fill="#4aa9e6"/></svg>
<div class="t" style="left:49.70px;top:321.00px;font-size:13.8px;letter-spacing:0.178px;color:#161616;">Pictures</div>
<div class="t" style="left:219.80px;top:321.00px;font-size:13.2px;letter-spacing:-0.666px;color:#161616;">DIR</div>
<div class="t" style="left:258.30px;top:321.00px;font-size:13.8px;letter-spacing:0.402px;color:#161616;">23.09.2023, 02:58</div>
<div class="t" style="left:405.20px;top:321.00px;font-size:13.8px;letter-spacing:0.396px;color:#161616;">folder</div>
<svg class="abs" style="left:26.7px;top:339.9px" width="13.4" height="12.2"><use href="#sfolder"/></svg>
<svg class="abs" style="left:30px;top:344.6px;opacity:.75" width="7" height="6" viewBox="0 0 7 6"><rect x="1.6" y="1.1" width="3.8" height="3.8" rx=".5" transform="rotate(45 3.5 3)" fill="none" stroke="#4aa9e6" stroke-width=".8"/><circle cx="3.5" cy="3" r=".8" fill="#4aa9e6"/></svg>
<div class="t" style="left:49.70px;top:340.00px;font-size:13.8px;letter-spacing:0.042px;color:#161616;">Public</div>
<div class="t" style="left:219.80px;top:340.00px;font-size:13.2px;letter-spacing:-0.666px;color:#161616;">DIR</div>
<div class="t" style="left:258.30px;top:340.00px;font-size:13.8px;letter-spacing:0.277px;color:#161616;">20.09.2023, 10:38</div>
<div class="t" style="left:405.20px;top:340.00px;font-size:13.8px;letter-spacing:0.396px;color:#161616;">folder</div>
<div class="abs" style="left:543px;top:158px;width:59.7px;height:15.7px;background:#d5d7d7;border-radius:4px"></div>
<div class="t" style="left:553.70px;top:160.00px;font-size:12px;letter-spacing:-0.349px;color:#fff;font-weight:bold;-webkit-text-stroke:0;">name</div>
<svg class="abs" style="left:589.3px;top:163.6px" width="6" height="5" viewBox="0 0 6 5"><path d="M3 0 L6 5 H0Z" fill="#222"/></svg>
<div class="t" style="left:618.00px;top:160.00px;font-size:12px;letter-spacing:0.060px;color:#7c7c7c;font-weight:bold;-webkit-text-stroke:0;">extension</div>
<div class="t" style="left:704.00px;top:160.00px;font-size:12px;letter-spacing:0.106px;color:#7c7c7c;font-weight:bold;-webkit-text-stroke:0;">size</div>
<div class="t" style="left:757.00px;top:160.00px;font-size:12px;letter-spacing:0.072px;color:#7c7c7c;font-weight:bold;-webkit-text-stroke:0;">modified</div>
<div class="t" style="left:837.60px;top:160.00px;font-size:12px;letter-spacing:0.218px;color:#7c7c7c;font-weight:bold;-webkit-text-stroke:0;">created</div>
<div class="t" style="left:911.70px;top:160.00px;font-size:12px;letter-spacing:-0.010px;color:#7c7c7c;font-weight:bold;-webkit-text-stroke:0;">added</div>
<div class="t" style="left:977.00px;top:160.00px;font-size:12px;letter-spacing:-0.094px;color:#7c7c7c;font-weight:bold;-webkit-text-stroke:0;">opened</div>
<div class="t" style="left:1049.50px;top:160.00px;font-size:12px;letter-spacing:0.111px;color:#7c7c7c;font-weight:bold;-webkit-text-stroke:0;">kind</div>
<div class="abs" style="left:537px;top:176px;width:537px;height:1px;background:#e3e3e3;"></div>
<svg class="abs" style="left:600px;top:202px;filter:drop-shadow(0 .6px .7px rgba(0,0,0,.35))" width="72" height="60.6" viewBox="0 0 72 61"><use href="#folder"/><path d="M20 31.6 L36 18.6 L52 31.6" fill="none" stroke="#42a5e3" stroke-width="2.2" stroke-linejoin="miter"/><path d="M24.2 30 L36 20.6 L47.5 30 V43.4 Q47.5 45.4 45.5 45.4 H26.2 Q24.2 45.4 24.2 43.4Z" fill="#42a5e3"/><rect x="44.2" y="21.4" width="3.2" height="7" fill="#42a5e3"/><rect x="32.3" y="34" width="7.4" height="9.6" rx=".6" fill="#76ccf9"/></svg>
<div class="t" style="left:631.70px;top:281.00px;font-size:13.8px;letter-spacing:-0.368px;color:#161616;">..</div>
<svg class="abs" style="left:769.5px;top:202px;filter:drop-shadow(0 .6px .7px rgba(0,0,0,.35))" width="72" height="60.6" viewBox="0 0 72 61"><use href="#folder"/><g fill="none" stroke="#42a5e3" stroke-width="3" stroke-linecap="round"><path d="M22.6 36.6 H49.2"/><path d="M38.6 20.6 L29.3 36.6"/><path d="M26.9 40.8 L25.8 42.6"/><path d="M33.4 20.6 L45.9 42.4"/></g></svg>
<div class="t" style="left:766.30px;top:281.00px;font-size:13.8px;letter-spacing:0.335px;color:#161616;">Applications</div>
<svg class="abs" style="left:939px;top:202px;filter:drop-shadow(0 .6px .7px rgba(0,0,0,.35))" width="72" height="60.6" viewBox="0 0 72 61"><use href="#folder"/><rect x="20.8" y="19.4" width="30" height="23.4" rx="3.2" fill="none" stroke="#42a5e3" stroke-width="1.6"/><path d="M21 23.6 H50.6" stroke="#42a5e3" stroke-width="1.3"/><rect x="26" y="35.2" width="20" height="3.6" rx=".6" fill="#42a5e3"/></svg>
<div class="t" style="left:948.20px;top:281.00px;font-size:13.8px;letter-spacing:0.429px;color:#161616;">Desktop</div>
<svg class="abs" style="left:600px;top:339px;filter:drop-shadow(0 .6px .7px rgba(0,0,0,.35))" width="72" height="60.6" viewBox="0 0 72 61"><use href="#folder"/><path d="M28.2 20 H36 L46.2 30 V42.6 Q46.2 45.3 43.5 45.3 H28.4 Q25.8 45.3 25.8 42.6 V22.6 Q25.8 20 28.2 20Z M36 20 V27.4 Q36 29.6 38.2 29.6 H46" fill="none" stroke="#42a5e3" stroke-width="1.6" stroke-linejoin="round"/></svg>
<div class="t" style="left:599.80px;top:418.00px;font-size:13.8px;letter-spacing:0.213px;color:#161616;">Documents</div>
<svg class="abs" style="left:769.5px;top:339px;filter:drop-shadow(0 .6px .7px rgba(0,0,0,.35))" width="72" height="60.6" viewBox="0 0 72 61"><use href="#folder"/><circle cx="35.9" cy="32.1" r="13.5" fill="#42a5e3"/><path d="M35.9 25.4 V38.2 M30.6 33.2 L35.9 38.4 L41.2 33.2" fill="none" stroke="#76ccf9" stroke-width="1.8" stroke-linecap="round" stroke-linejoin="round"/></svg>
<div class="t" style="left:770.30px;top:418.00px;font-size:13.8px;letter-spacing:0.178px;color:#161616;">Downloads</div>
<svg class="abs" style="left:939px;top:339px;filter:drop-shadow(0 .6px .7px rgba(0,0,0,.35))" width="72" height="60.6" viewBox="0 0 72 61"><use href="#folder"/><rect x="20.3" y="18.8" width="30.6" height="23.6" rx="2.4" fill="#42a5e3"/><rect x="27" y="21.3" width="17.8" height="8.4" fill="#76ccf9"/><rect x="27" y="31.9" width="17.8" height="8.7" fill="#76ccf9"/><rect x="22.2" y="21.3" width="2.9" height="2.3" fill="#76ccf9"/><rect x="22.2" y="25.8" width="2.9" height="2.3" fill="#76ccf9"/><rect x="22.2" y="30.2" width="2.9" height="2.3" fill="#76ccf9"/><rect x="22.2" y="34.3" width="2.9" height="2.3" fill="#76ccf9"/><rect x="22.2" y="38.6" width="2.9" height="2.3" fill="#76ccf9"/><rect x="46.4" y="21.3" width="2.9" height="2.3" fill="#76ccf9"/><rect x="46.4" y="25.8" width="2.9" height="2.3" fill="#76ccf9"/><rect x="46.4" y="30.2" width="2.9" height="2.3" fill="#76ccf9"/><rect x="46.4" y="34.3" width="2.9" height="2.3" fill="#76ccf9"/><rect x="46.4" y="38.6" width="2.9" height="2.3" fill="#76ccf9"/></svg>
<div class="t" style="left:952.60px;top:418.00px;font-size:13.8px;letter-spacing:0.057px;color:#161616;">Movies</div>
<svg class="abs" style="left:600px;top:476px;filter:drop-shadow(0 .6px .7px rgba(0,0,0,.35))" width="72" height="60.6" viewBox="0 0 72 61"><use href="#folder"/><path d="M29.8 21.7 L45.7 18.8 V24.6 L29.8 27.5Z" fill="#42a5e3"/><rect x="29.8" y="22" width="2" height="20" fill="#42a5e3"/><rect x="43.7" y="20" width="2" height="19.6" fill="#42a5e3"/><ellipse cx="27.4" cy="42.2" rx="4.5" ry="3.7" transform="rotate(-20 27.4 42.2)" fill="#42a5e3"/><ellipse cx="41.3" cy="39.6" rx="4.5" ry="3.7" transform="rotate(-20 41.3 39.6)" fill="#42a5e3"/></svg>
<div class="t" style="left:617.40px;top:555.00px;font-size:13.8px;letter-spacing:0.266px;color:#161616;">Music</div>
<svg class="abs" style="left:769.5px;top:476px;filter:drop-shadow(0 .6px .7px rgba(0,0,0,.35))" width="72" height="60.6" viewBox="0 0 72 61"><use href="#folder"/><rect x="21.4" y="19.6" width="29.4" height="22" rx="3" fill="none" stroke="#42a5e3" stroke-width="1.7"/><circle cx="30.1" cy="27.2" r="3" fill="#42a5e3"/><path d="M22.4 38.6 L27.6 33.4 L32.6 36.3 L39.8 30 L49.8 37.6 V40.6 H22.4Z" fill="#42a5e3"/></svg>
<div class="t" style="left:779.90px;top:555.00px;font-size:13.8px;letter-spacing:0.164px;color:#161616;">Pictures</div>
<svg class="abs" style="left:939px;top:476px;filter:drop-shadow(0 .6px .7px rgba(0,0,0,.35))" width="72" height="60.6" viewBox="0 0 72 61"><use href="#folder"/><rect x="26.4" y="24.4" width="19" height="19" rx="2.2" transform="rotate(45 35.9 33.9)" fill="none" stroke="#42a5e3" stroke-width="1.6"/><circle cx="36.4" cy="26.3" r="1.6" fill="#42a5e3"/><path d="M35.6 28.8 L33.2 30.4 L32.6 33.6 M35.8 28.8 L36 34.6 L38.6 41.4 M36 34.6 L33.6 38 L31.6 41.4 M36.2 30 L38.2 32.2 L40.6 31.6" fill="none" stroke="#42a5e3" stroke-width="1.5" stroke-linecap="round" stroke-linejoin="round"/></svg>
<div class="t" style="left:955.50px;top:555.00px;font-size:13.8px;letter-spacing:0.182px;color:#161616;">Public</div>
<div class="abs" style="left:0px;top:598px;width:1074px;height:1px;background:#e3e3e3;"></div>
<div class="t" style="left:142.70px;top:603.00px;font-size:13.3px;letter-spacing:0.125px;color:#1e1e1e;">0 bytes / 0 bytes in 0 / 0 file(s). 0 / 8 dir(s)</div>
<div class="t" style="left:549.00px;top:603.00px;font-size:13.3px;color:#1e1e1e;">..</div>
<div class="t" style="left:909.00px;top:603.00px;font-size:13.3px;letter-spacing:-1.203px;color:#1e1e1e;">DIR</div>
<div class="t" style="left:941.00px;top:603.00px;font-size:13.3px;letter-spacing:-0.249px;color:#1e1e1e;">21.12.2023, 19:06:19</div>
<div class="abs" style="left:0px;top:619px;width:1074px;height:1px;background:#d9d9d9;"></div>
<div class="abs" style="left:0px;top:620px;width:1074px;height:34px;background:#f4f4f4;"></div>
<div class="t" style="left:280.70px;top:632.00px;font-size:14.6px;letter-spacing:0.387px;color:#222;">/Users/mac</div>
<div class="abs" style="left:369px;top:626.6px;width:693.3px;height:22.3px;background:#fff;border-radius:5.5px;box-shadow:0 0 0 .5px rgba(0,0,0,.08),0 .5px 1px rgba(0,0,0,.22)"></div>
<svg class="abs" style="left:1042px;top:628.7px" width="18.2" height="18.2" viewBox="0 0 18 18"><rect width="18" height="18" rx="4.6" fill="url(#gBlueBtn)"/><path d="M5.4 7.4 L9 10.9 L12.6 7.4" fill="none" stroke="#fff" stroke-width="1.8" stroke-linecap="round" stroke-linejoin="round"/></svg>
<div class="abs" style="left:0px;top:654px;width:1074px;height:1px;background:#c6c6c6;"></div>
<div class="abs" style="left:0px;top:655px;width:1074px;height:20px;background:#f6f6f6;"></div>
<div class="t" style="left:57.00px;top:664.00px;font-size:15.2px;letter-spacing:0.098px;color:#2a2a2a;">View - F3</div>
<div class="t" style="left:239.00px;top:664.00px;font-size:15.2px;letter-spacing:0.133px;color:#2a2a2a;">Edit - F4</div>
<div class="abs" style="left:177.5px;top:655px;width:1.5px;height:20px;background:#c2c2c2;"></div>
<div class="t" style="left:413.50px;top:664.00px;font-size:15.2px;letter-spacing:0.096px;color:#2a2a2a;">Copy - F5</div>
<div class="abs" style="left:356.5px;top:655px;width:1.5px;height:20px;background:#c2c2c2;"></div>
<div class="t" style="left:592.00px;top:664.00px;font-size:15.2px;letter-spacing:0.010px;color:#2a2a2a;">Move - F6</div>
<div class="abs" style="left:535.5px;top:655px;width:1.5px;height:20px;background:#c2c2c2;"></div>
<div class="t" style="left:751.00px;top:664.00px;font-size:15.2px;letter-spacing:0.003px;color:#2a2a2a;">New Folder - F7</div>
<div class="abs" style="left:714.5px;top:655px;width:1.5px;height:20px;background:#c2c2c2;"></div>
<div class="t" style="left:946.00px;top:664.00px;font-size:15.2px;letter-spacing:0.131px;color:#2a2a2a;">Delete - F8</div>
<div class="abs" style="left:893.5px;top:655px;width:1.5px;height:20px;background:#c2c2c2;"></div>
<div class="abs" style="left:536.3px;top:47px;width:1.6px;height:573px;background:#e1e1e1;"></div>
<div class="abs" style="left:0px;top:0px;width:1px;height:675px;background:rgba(0,0,0,.18);"></div>
</div>
</body>
</html>
